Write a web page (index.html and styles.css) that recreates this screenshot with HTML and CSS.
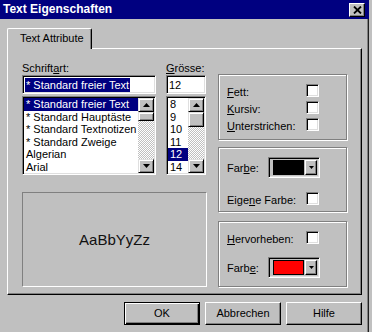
FILE: index.html
```html
<!DOCTYPE html>
<html>
<head>
<meta charset="utf-8">
<title>Text Eigenschaften</title>
<link rel="stylesheet" href="styles.css">
</head>
<body>
<div class="window">
  <div class="titlebar">
    <span class="title">Text Eigenschaften</span>
    <span class="close"><svg width="9" height="8" viewBox="0 0 9 8"><path d="M1 0.5L8 7.5M8 0.5L1 7.5" stroke="#000" stroke-width="1.8"/></svg></span>
  </div>
  <div class="client">
    <div class="tabs"><div class="tab">Text Attribute</div></div>
    <div class="panel">
      <div class="leftcol">
        <div class="fields">
          <div class="fontcol">
            <div class="lbl">Schrift<u>a</u>rt:</div>
            <div class="input"><span class="sel">* Standard freier Text</span></div>
            <div class="list">
              <div class="items">
                <div class="item selected">* Standard freier Text</div>
                <div class="item">* Standard Hauptäste</div>
                <div class="item">* Standard Textnotizen</div>
                <div class="item">* Standard Zweige</div>
                <div class="item">Algerian</div>
                <div class="item">Arial</div>
              </div>
              <div class="scrollbar">
                <div class="sbtn"><svg width="7" height="4" viewBox="0 0 7 4"><polygon points="0,4 7,4 3.5,0" fill="#000"/></svg></div>
                <div class="thumb thumb-font"></div>
                <div class="track"></div>
                <div class="sbtn"><svg width="7" height="4" viewBox="0 0 7 4"><polygon points="0,0 7,0 3.5,4" fill="#000"/></svg></div>
              </div>
            </div>
          </div>
          <div class="sizecol">
            <div class="lbl"><u>G</u>rösse:</div>
            <div class="input"><span>12</span></div>
            <div class="list">
              <div class="items">
                <div class="item">8</div>
                <div class="item">9</div>
                <div class="item">10</div>
                <div class="item">11</div>
                <div class="item selected">12</div>
                <div class="item">14</div>
              </div>
              <div class="scrollbar">
                <div class="sbtn"><svg width="7" height="4" viewBox="0 0 7 4"><polygon points="0,4 7,4 3.5,0" fill="#000"/></svg></div>
                <div class="thumb thumb-size"></div>
                <div class="track"></div>
                <div class="sbtn"><svg width="7" height="4" viewBox="0 0 7 4"><polygon points="0,0 7,0 3.5,4" fill="#000"/></svg></div>
              </div>
            </div>
          </div>
        </div>
        <div class="preview">AaBbYyZz</div>
      </div>
      <div class="rightcol">
        <div class="group g1">
          <div class="row"><span class="rlbl"><u>F</u>ett:</span><span class="check"></span></div>
          <div class="row"><span class="rlbl"><u>K</u>ursiv:</span><span class="check"></span></div>
          <div class="row"><span class="rlbl"><u>U</u>nterstrichen:</span><span class="check"></span></div>
        </div>
        <div class="group g2">
          <div class="row crow"><span class="rlbl">Far<u>b</u>e:</span>
            <span class="combo"><span class="swatch black"></span><span class="cbtn"><svg width="5" height="3" viewBox="0 0 5 3"><polygon points="0,0 5,0 2.5,3" fill="#000"/></svg></span></span>
          </div>
          <div class="row r2"><span class="rlbl">Eige<u>n</u>e Farbe:</span><span class="check"></span></div>
        </div>
        <div class="group g3">
          <div class="row"><span class="rlbl"><u>H</u>ervorheben:</span><span class="check"></span></div>
          <div class="row crow r3"><span class="rlbl">Farb<u>e</u>:</span>
            <span class="combo"><span class="swatch red"></span><span class="cbtn"><svg width="5" height="3" viewBox="0 0 5 3"><polygon points="0,0 5,0 2.5,3" fill="#000"/></svg></span></span>
          </div>
        </div>
      </div>
    </div>
    <div class="buttons">
      <div class="btn default"><span class="btn-in">OK</span></div>
      <div class="btn"><span class="btn-in">Abbrechen</span></div>
      <div class="btn"><span class="btn-in">Hilfe</span></div>
    </div>
  </div>
</div>
</body>
</html>
```
FILE: styles.css
```css
* { box-sizing: border-box; }
body {
  margin: 0;
  background: #c0c0c0;
  font-family: "Liberation Sans", Arial, sans-serif;
  font-size: 11px;
  color: #000;
}
u { text-decoration: underline; text-underline-offset: 1px; }

.window { width: 369px; height: 332px; }

.titlebar {
  height: 19px;
  background: #000080;
  display: flex;
  align-items: center;
  justify-content: space-between;
  padding: 0 4px 0 3px;
}
.title {
  color: #fff;
  font-weight: bold;
  font-size: 12px;
  line-height: 19px;
}
.close {
  width: 16px;
  height: 14px;
  background: #c0c0c0;
  border-left: 1px solid #fff;
  border-top: 1px solid #fff;
  border-right: 1px solid #000;
  border-bottom: 1px solid #000;
  box-shadow: inset -1px -1px 0 #808080;
  display: flex;
  align-items: center;
  justify-content: center;
}
.close svg { display: block; }

.client {
  height: 313px;
  border-right: 1px solid #202020;
  box-shadow: inset -1px 0 0 #808080;
}

.tabs { padding: 9px 0 0 7px; height: 30px; }
.tab {
  position: relative;
  z-index: 1;
  width: 85px;
  height: 21px;
  background: #c0c0c0;
  border-left: 1px solid #fff;
  border-top: 1px solid #fff;
  border-right: 1px solid #000;
  border-top-left-radius: 2px;
  border-top-right-radius: 2px;
  box-shadow: inset -1px 0 0 #808080;
  padding: 1px 0 0 12px;
  line-height: 17px;
}

.panel {
  margin-left: 7px;
  margin-top: -1px;
  width: 355px;
  height: 247px;
  border-left: 1px solid #fff;
  border-top: 1px solid #fff;
  border-right: 1px solid #000;
  border-bottom: 1px solid #000;
  box-shadow: inset -1px -1px 0 #808080;
  padding: 12px 14px;
  display: flex;
  gap: 11px;
}

.leftcol { width: 185px; }
.fields { display: flex; gap: 10px; }
.fontcol { width: 134px; }
.sizecol { width: 40px; }

.lbl { height: 14px; line-height: 14px; }

.input {
  height: 19px;
  margin-bottom: 2px;
  background: #fff;
  border-top: 1px solid #808080;
  border-left: 1px solid #808080;
  border-right: 1px solid #fff;
  border-bottom: 1px solid #fff;
  box-shadow: inset 1px 1px 0 #000, inset -1px -1px 0 #dfdfdf;
  padding: 1px 2px;
  display: flex;
  align-items: center;
  line-height: 14px;
}
.input .sel { background: #000080; color: #fff; padding: 0 1px; }

.list {
  height: 79px;
  background: #fff;
  border-top: 1px solid #808080;
  border-left: 1px solid #808080;
  border-right: 1px solid #fff;
  border-bottom: 1px solid #fff;
  box-shadow: inset 1px 1px 0 #000, inset -1px -1px 0 #dfdfdf;
  padding: 1px;
  display: flex;
  overflow: hidden;
}
.items { flex: 1; min-width: 0; overflow: hidden; }
.item {
  height: 12.5px;
  line-height: 12.5px;
  padding-left: 2px;
  white-space: nowrap;
}
.item.selected { background: #000080; color: #fff; }

.scrollbar { width: 16px; display: flex; flex-direction: column; }
.sbtn, .thumb {
  background: #c0c0c0;
  border-left: 1px solid #dfdfdf;
  border-top: 1px solid #dfdfdf;
  border-right: 1px solid #000;
  border-bottom: 1px solid #000;
  box-shadow: inset 1px 1px 0 #fff, inset -1px -1px 0 #808080;
}
.sbtn {
  height: 14px;
  display: flex;
  align-items: center;
  justify-content: center;
}
.sbtn svg { display: block; }
.thumb-font { height: 9px; }
.thumb-size { height: 15px; }
.track {
  flex: 1;
  background: repeating-conic-gradient(#fff 0 25%, #c0c0c0 0 50%) 0 0 / 2px 2px;
}

.preview {
  margin-top: 17px;
  width: 185px;
  height: 95px;
  border-top: 1px solid #808080;
  border-left: 1px solid #808080;
  border-right: 1px solid #fff;
  border-bottom: 1px solid #fff;
  display: flex;
  align-items: center;
  justify-content: center;
  font-size: 15px;
  color: #111;
}

.rightcol { width: 129px; padding-top: 13px; }
.group {
  border: 1px solid #808080;
  box-shadow: inset 1px 1px 0 #fff, 1px 1px 0 #fff;
  padding: 7px 27px 0 8px;
}
.g1 { height: 66px; }
.g2 { height: 65px; margin-top: 7px; padding-top: 9px; }
.g3 { height: 66px; margin-top: 9px; }

.row {
  height: 17px;
  display: flex;
  justify-content: space-between;
  align-items: flex-start;
}
.rlbl { align-self: flex-end; line-height: 13px; white-space: nowrap; }
.check {
  margin-top: 2px;
  width: 13px;
  height: 13px;
  background: #fff;
  border-top: 1px solid #808080;
  border-left: 1px solid #808080;
  border-right: 1px solid #fff;
  border-bottom: 1px solid #fff;
  box-shadow: inset 1px 1px 0 #000, inset -1px -1px 0 #dfdfdf;
}
.crow { height: 21px; margin-right: -1px; }
.crow .rlbl { padding-bottom: 3px; }
.r2 { margin-top: 12px; }
.r3 { margin-top: 11px; }

.combo {
  width: 52px;
  height: 21px;
  border-top: 1px solid #808080;
  border-left: 1px solid #808080;
  border-right: 1px solid #fff;
  border-bottom: 1px solid #fff;
  box-shadow: inset 1px 1px 0 #000, inset -1px -1px 0 #dfdfdf;
  padding: 2px 2px 2px 4px;
  display: flex;
  gap: 1px;
}
.swatch { flex: 1; border: 1px solid #000; }
.swatch.black { background: #000; }
.swatch.red { background: #ff0000; }
.cbtn {
  width: 12px;
  background: #c0c0c0;
  border-left: 1px solid #fff;
  border-top: 1px solid #fff;
  border-right: 1px solid #000;
  border-bottom: 1px solid #000;
  box-shadow: inset -1px -1px 0 #808080;
  display: flex;
  align-items: center;
  justify-content: center;
}
.cbtn svg { display: block; }

.buttons {
  margin: 7px 0 0 7px;
  width: 355px;
  display: flex;
  justify-content: flex-end;
  gap: 5px;
}
.btn {
  width: 76px;
  height: 23px;
  background: #c0c0c0;
  border-left: 1px solid #fff;
  border-top: 1px solid #fff;
  border-right: 1px solid #000;
  border-bottom: 1px solid #000;
  box-shadow: inset -1px -1px 0 #808080;
  display: flex;
  align-items: center;
  justify-content: center;
}
.btn.default {
  border: 1px solid #000;
  box-shadow: inset 1px 1px 0 #fff, inset -1px -1px 0 #000, inset -2px -2px 0 #808080;
}
.btn-in { line-height: 13px; }
```
